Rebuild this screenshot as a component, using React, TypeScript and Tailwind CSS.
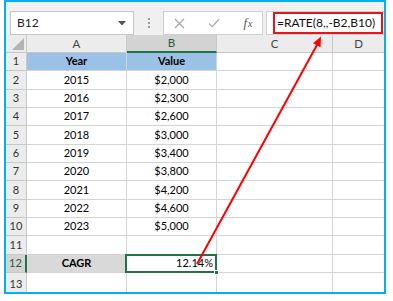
import React from "react";

const rows: { n: number; a: string; b: string; h: string }[] = [
  { n: 1, a: "Year", b: "Value", h: "h-[18px]" },
  { n: 2, a: "2015", b: "$2,000", h: "h-[19px]" },
  { n: 3, a: "2016", b: "$2,300", h: "h-[18px]" },
  { n: 4, a: "2017", b: "$2,600", h: "h-[18px]" },
  { n: 5, a: "2018", b: "$3,000", h: "h-[19px]" },
  { n: 6, a: "2019", b: "$3,400", h: "h-[18px]" },
  { n: 7, a: "2020", b: "$3,800", h: "h-[18px]" },
  { n: 8, a: "2021", b: "$4,200", h: "h-[19px]" },
  { n: 9, a: "2022", b: "$4,600", h: "h-[18px]" },
  { n: 10, a: "2023", b: "$5,000", h: "h-[18px]" },
  { n: 11, a: "", b: "", h: "h-[19px]" },
];

function Row({ n, a, b, h }: { n: number; a: string; b: string; h: string }) {
  const head = n === 1;
  return (
    <div className={`flex ${h}`}>
      <div className="w-[21px] flex items-center justify-center border-r border-b border-[#c8c8c8] bg-[#ececec] text-[#333]">
        {n}
      </div>
      <div
        className={`w-[100px] flex items-center justify-center border-r border-b border-[#d4d4d4] ${
          head ? "bg-[#9bc2e6] font-bold" : ""
        }`}
      >
        {a}
      </div>
      <div
        className={`w-[90px] flex items-center justify-center border-r border-b border-[#d4d4d4] ${
          head ? "bg-[#9bc2e6] font-bold" : ""
        }`}
      >
        {b}
      </div>
      <div className="w-[116px] border-r border-b border-[#d4d4d4]" />
      <div className="flex-1 border-b border-[#d4d4d4]" />
    </div>
  );
}

export default function App() {
  return (
    <div className="relative w-[393px] h-[301px] bg-white font-['Lato','Liberation_Sans',sans-serif] text-[11px] text-black">
      <div className="ml-[4px] w-[382px] h-[294px] border-2 border-[#00b0f0] bg-[#f0f0f0] flex flex-col overflow-hidden">
        {/* toolbar */}
        <div className="h-[43px] flex items-start pt-[9px] pl-[4px]">
          <div className="w-[124px] h-[24px] bg-white border border-[#c6c6c6] flex items-center justify-between pl-[6px] pr-[7px] text-[12px] text-[#222]">
            <span>B12</span>
            <svg width="8" height="5" viewBox="0 0 8 5">
              <path d="M0 0H8L4 4.5Z" fill="#555" />
            </svg>
          </div>
          <div className="w-[29px] h-[24px] flex flex-col items-center justify-center gap-[2px]">
            <span className="w-[2px] h-[2px] bg-[#9a9a9a]" />
            <span className="w-[2px] h-[2px] bg-[#9a9a9a]" />
            <span className="w-[2px] h-[2px] bg-[#9a9a9a]" />
          </div>
          <div className="w-[100px] h-[24px] bg-white border border-[#d0d0d0] flex items-center">
            <div className="w-[30px] flex justify-center">
              <svg width="11" height="11" viewBox="0 0 11 11">
                <path d="M1 1L10 10M10 1L1 10" stroke="#a8a8a8" strokeWidth="1.3" />
              </svg>
            </div>
            <div className="w-[40px] flex justify-center">
              <svg width="12" height="10" viewBox="0 0 12 10">
                <path d="M1 5.5L4.2 8.6L11 1.2" stroke="#a8a8a8" strokeWidth="1.3" fill="none" />
              </svg>
            </div>
            <div className="flex-1 flex justify-center items-baseline font-['Liberation_Serif',serif] italic text-[13px] text-[#555]">
              f<span className="text-[10px] ml-[1px]">x</span>
            </div>
          </div>
          <div className="ml-[3px] flex-1 h-[24px] bg-white border border-[#d0d0d0] border-r-0 flex items-center pl-[6px]">
            <div className="w-[110px] h-[22px] border-2 border-[#e8141b] flex items-center pl-[2px] text-[12px] text-[#111]">
              =RATE(8,,-B2,B10)
            </div>
          </div>
        </div>
        {/* column header */}
        <div className="flex h-[18px] text-[#444] text-[11.5px]">
          <div className="w-[21px] border-r border-b border-[#c8c8c8] bg-[#ececec] relative">
            <svg className="absolute right-[2px] bottom-[2px]" width="12" height="12" viewBox="0 0 12 12">
              <path d="M12 0V12H0Z" fill="#b4b4b4" />
            </svg>
          </div>
          <div className="w-[100px] border-r border-b border-[#c8c8c8] bg-[#ececec] flex items-center justify-center">A</div>
          <div className="w-[90px] border-r border-[#c8c8c8] border-b-2 border-b-[#217346] bg-[#d3d3d3] flex items-center justify-center text-[#1f5e3c]">
            B
          </div>
          <div className="w-[116px] border-r border-b border-[#c8c8c8] bg-[#ececec] flex items-center justify-center">C</div>
          <div className="flex-1 border-b border-[#c8c8c8] bg-[#ececec] flex items-center justify-center">D</div>
        </div>
        {/* grid */}
        <div className="flex-1 bg-white flex flex-col">
          {rows.map((r) => (
            <Row key={r.n} {...r} />
          ))}
          <div className="flex h-[18px]">
            <div className="w-[21px] flex items-center justify-center border-r-2 border-r-[#217346] border-b border-b-[#c8c8c8] bg-[#d3d3d3] text-[#1f5e3c]">
              12
            </div>
            <div className="w-[100px] flex items-center justify-center border-r border-b border-[#d4d4d4] bg-[#d9d9d9] font-bold">
              CAGR
            </div>
            <div className="w-[90px] relative flex items-center justify-end pr-[3px] border-r border-b border-[#d4d4d4]">
              12.14%
              <div className="absolute -top-[1px] -left-[2px] -right-[1px] -bottom-[1px] border-2 border-[#217346]" />
              <div className="absolute -right-[3px] -bottom-[3px] w-[5px] h-[5px] bg-[#217346] border border-white" />
            </div>
            <div className="w-[116px] border-r border-b border-[#d4d4d4]" />
            <div className="flex-1 border-b border-[#d4d4d4]" />
          </div>
          <div className="flex flex-1 overflow-hidden">
            <div className="w-[21px] flex justify-center border-r border-[#c8c8c8] bg-[#ececec] text-[#333] pt-[3px]">13</div>
            <div className="w-[100px] border-r border-[#d4d4d4]" />
            <div className="w-[90px] border-r border-[#d4d4d4]" />
            <div className="w-[116px] border-r border-[#d4d4d4]" />
            <div className="flex-1" />
          </div>
        </div>
      </div>
      {/* arrow */}
      <svg className="absolute top-0 left-0 pointer-events-none" width="393" height="301" viewBox="0 0 393 301">
        <line x1="197" y1="264" x2="317.5" y2="44" stroke="#ff0000" strokeWidth="2" />
        <path d="M321 36.5L313 43.3L320.6 47.2Z" fill="#ff0000" />
      </svg>
    </div>
  );
}
